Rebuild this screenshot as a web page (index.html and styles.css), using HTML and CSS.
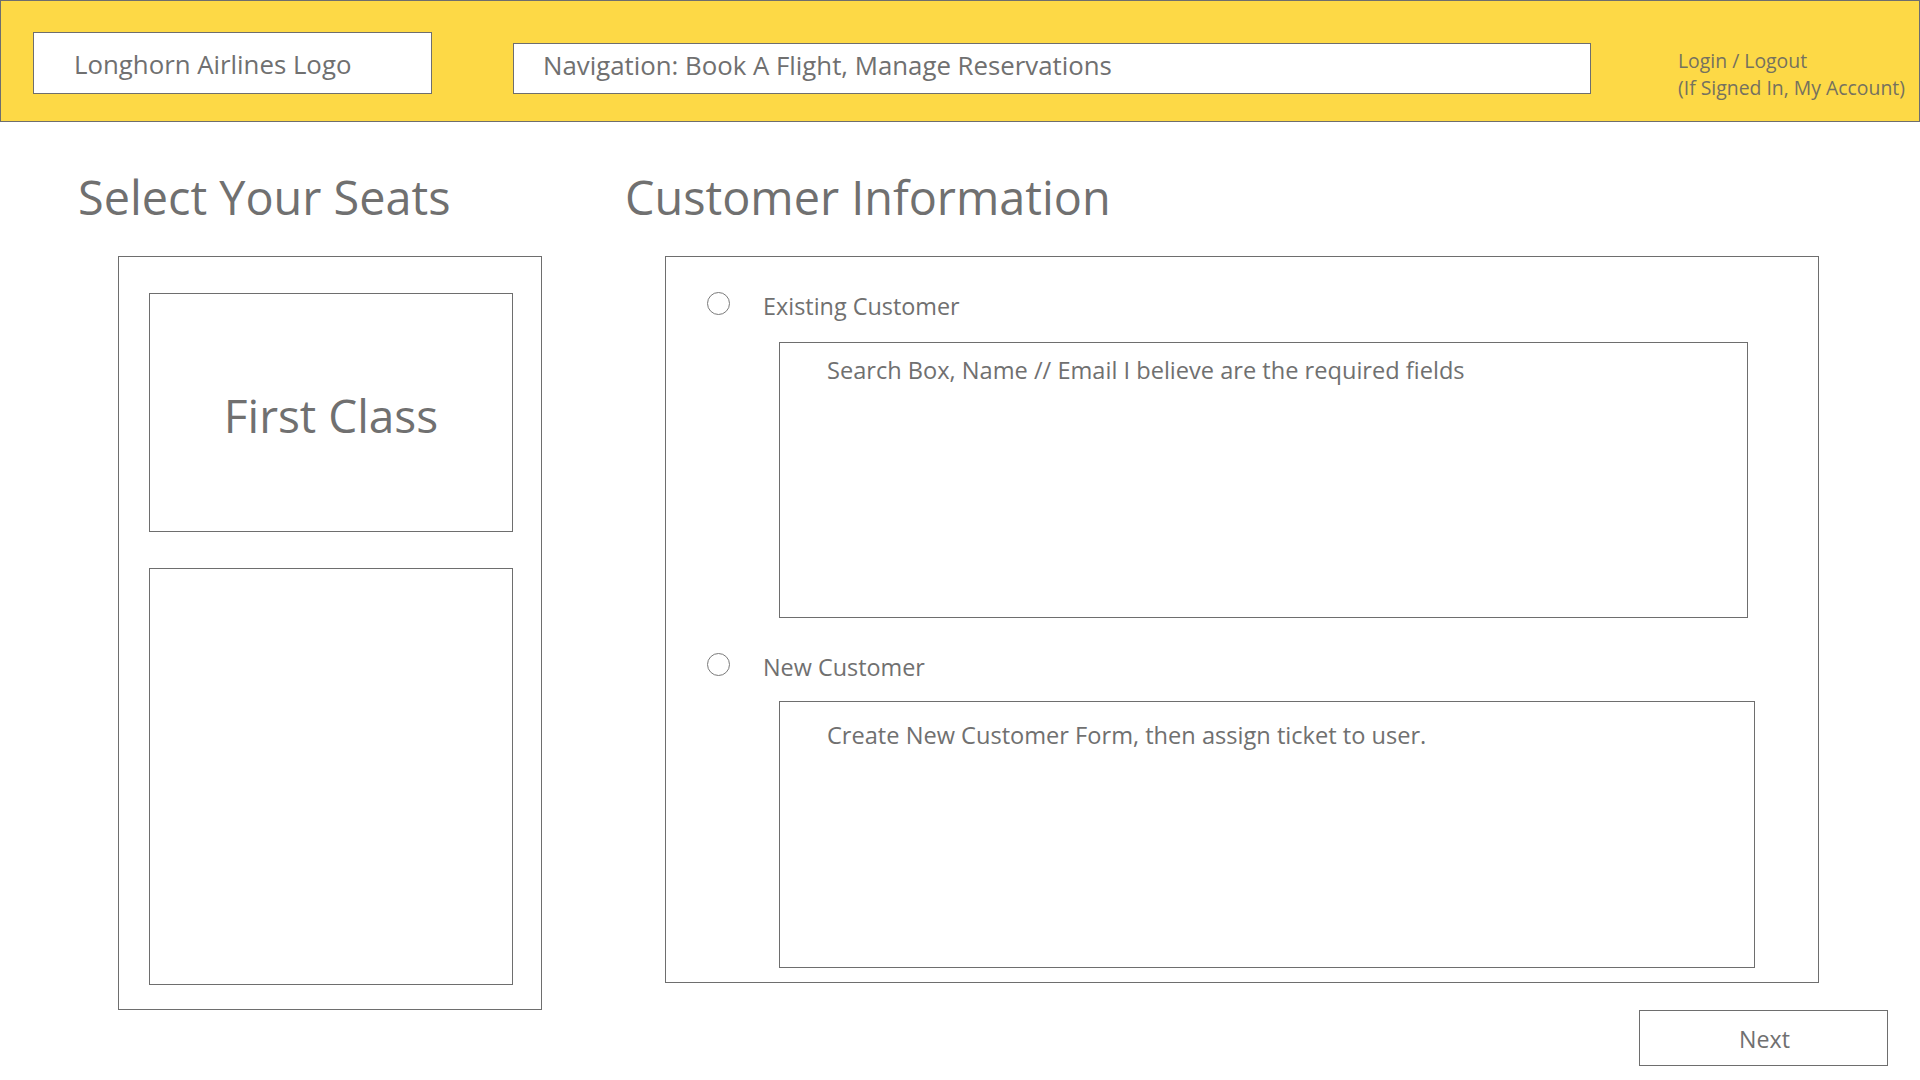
FILE: index.html
```html
<!DOCTYPE html>
<html lang="en">
<head>
<meta charset="utf-8">
<title>Longhorn Airlines - Select Seats</title>
<link rel="stylesheet" href="styles.css">
</head>
<body>
<header class="topbar">
  <div class="logo">Longhorn Airlines Logo</div>
  <nav class="nav">Navigation: Book A Flight, Manage Reservations</nav>
  <div class="account">
    <div>Login / Logout</div>
    <div>(If Signed In, My Account)</div>
  </div>
</header>
<main class="main">
  <section class="seats">
    <h1 class="title seats-title">Select Your Seats</h1>
    <div class="seat-map">
      <div class="cabin cabin-first">First Class</div>
      <div class="cabin cabin-economy"></div>
    </div>
  </section>
  <section class="customer">
    <h1 class="title customer-title">Customer Information</h1>
    <div class="customer-panel">
      <label class="option option-existing">
        <span class="radio"></span>
        <span class="option-label">Existing Customer</span>
      </label>
      <div class="form-box form-search">Search Box, Name // Email I believe are the required fields</div>
      <label class="option option-new">
        <span class="radio"></span>
        <span class="option-label">New Customer</span>
      </label>
      <div class="form-box form-new">Create New Customer Form, then assign ticket to user.</div>
    </div>
    <button class="next">Next</button>
  </section>
</main>
</body>
</html>
```
FILE: styles.css
```css
* { box-sizing: border-box; }
html, body { margin: 0; padding: 0; }
body {
  width: 1920px;
  height: 1080px;
  overflow: hidden;
  background: #ffffff;
  font-family: "Open Sans", "Noto Sans", sans-serif;
  font-weight: 400;
  color: #707070;
}

/* Header */
.topbar {
  height: 122px;
  background: #fdd946;
  border: 1px solid #6e6e6e;
  display: flex;
  align-items: flex-start;
}
.logo {
  margin: 31px 0 0 32px;
  width: 399px;
  height: 62px;
  padding: 3px 0 0 40px;
  background: #ffffff;
  border: 1px solid #6e6e6e;
  font-size: 25.8px;
  line-height: 56px;
  white-space: nowrap;
}
.nav {
  margin: 42px 0 0 81px;
  width: 1078px;
  height: 51px;
  padding: 0 0 0 29px;
  background: #ffffff;
  border: 1px solid #6e6e6e;
  font-size: 25.8px;
  line-height: 42px;
  white-space: nowrap;
}
.account {
  margin: 46px 0 0 87px;
  font-size: 19.4px;
  line-height: 27px;
  color: #75715f;
  white-space: nowrap;
}

/* Main */
.main {
  display: flex;
  align-items: flex-start;
}
.title {
  margin: 45px 0 29px 0;
  font-size: 46.8px;
  font-weight: 400;
  line-height: 60px;
  white-space: nowrap;
}
.seats {
  width: 624px;
  flex: none;
}
.seats-title { padding-left: 78px; }
.customer-title { padding-left: 1px; }
.seat-map {
  margin-left: 118px;
  width: 424px;
  height: 754px;
  border: 1px solid #6e6e6e;
  padding: 36px 0 0 30px;
  display: flex;
  flex-direction: column;
  gap: 36px;
}
.cabin {
  width: 364px;
  border: 1px solid #6e6e6e;
}
.cabin-first {
  height: 239px;
  display: flex;
  align-items: center;
  justify-content: center;
  padding: 4px 0 0 0;
  font-size: 46px;
  line-height: 60px;
}
.cabin-economy { height: 417px; }

.customer {
  flex: 1;
  display: flex;
  flex-direction: column;
  align-items: flex-start;
}
.customer-panel {
  margin-left: 41px;
  width: 1154px;
  height: 727px;
  border: 1px solid #6e6e6e;
  display: flex;
  flex-direction: column;
  align-items: flex-start;
}
.option {
  display: flex;
  align-items: flex-start;
  margin-left: 41px;
}
.option-existing { margin-top: 35px; }
.option-new { margin-top: 35px; }
.radio {
  width: 23px;
  height: 23px;
  border: 1px solid #7a7a7a;
  border-radius: 50%;
  background: #ffffff;
  flex: none;
}
.option-label {
  margin-left: 33px;
  padding-top: 2px;
  font-size: 23.4px;
  line-height: 24px;
  white-space: nowrap;
}
.form-box {
  margin-left: 113px;
  border: 1px solid #6e6e6e;
  padding-left: 47px;
  font-size: 23.6px;
  line-height: 30px;
  white-space: nowrap;
}
.form-search {
  margin-top: 24px;
  width: 969px;
  height: 276px;
  padding-top: 12px;
}
.form-new {
  margin-top: 22px;
  width: 976px;
  height: 267px;
  padding-top: 18px;
}
.next {
  align-self: flex-end;
  margin: 27px 32px 0 0;
  width: 249px;
  height: 56px;
  padding: 1px 0 0 2px;
  background: #ffffff;
  border: 1px solid #6e6e6e;
  border-radius: 0;
  font-family: "Open Sans", "Noto Sans", sans-serif;
  font-size: 23.2px;
  line-height: 52px;
  color: #707070;
  cursor: pointer;
}
```
